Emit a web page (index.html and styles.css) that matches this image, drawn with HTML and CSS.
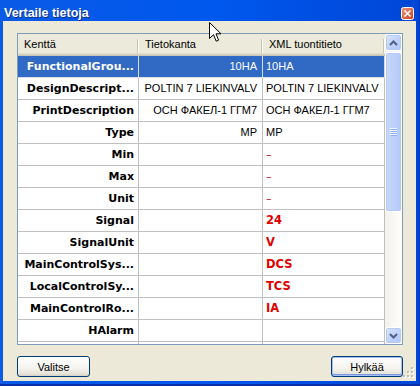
FILE: index.html
```html
<!doctype html>
<html>
<head>
	<meta charset="UTF-8">
	<title>Vertaile tietoja</title>
	<link rel="stylesheet" href="styles.css">
</head>
<body>
	<div class="window">
		<div class="titlebar">
			<span class="title">Vertaile tietoja</span>
			<span class="close">
				<svg width="13" height="13" viewBox="0 0 13 13">
					<defs>
						<linearGradient id="cg" x1="0" y1="0" x2="1" y2="1">
							<stop offset="0" stop-color="#f0957a"/>
							<stop offset="1" stop-color="#c9401e"/>
						</linearGradient>
					</defs>
					<rect x="0.5" y="0.5" width="12" height="12" rx="2" fill="url(#cg)" stroke="#fff"/>
					<path d="M3.5 3.5 L9.5 9.5 M9.5 3.5 L3.5 9.5" stroke="#fff" stroke-width="1.6"/>
				</svg>
			</span>
		</div>
		<div class="client">
			<div class="grid">
				<div class="table">
					<div class="head">
						<div class="hcell">Kenttä</div>
						<div class="hcell">Tietokanta</div>
						<div class="hcell">XML tuontitieto</div>
					</div>
					<div class="row sel">
						<div class="cell name">FunctionalGrou...</div>
						<div class="cell db">10HA</div>
						<div class="cell xml">10HA</div>
					</div>
					<div class="row">
						<div class="cell name">DesignDescript...</div>
						<div class="cell db">POLTIN 7 LIEKINVALV</div>
						<div class="cell xml">POLTIN 7 LIEKINVALV</div>
					</div>
					<div class="row">
						<div class="cell name">PrintDescription</div>
						<div class="cell db">ОСН ФАКЕЛ-1 ГГМ7</div>
						<div class="cell xml">ОСН ФАКЕЛ-1 ГГМ7</div>
					</div>
					<div class="row">
						<div class="cell name">Type</div>
						<div class="cell db">MP</div>
						<div class="cell xml">MP</div>
					</div>
					<div class="row">
						<div class="cell name">Min</div>
						<div class="cell db"></div>
						<div class="cell xml dash">–</div>
					</div>
					<div class="row">
						<div class="cell name">Max</div>
						<div class="cell db"></div>
						<div class="cell xml dash">–</div>
					</div>
					<div class="row">
						<div class="cell name">Unit</div>
						<div class="cell db"></div>
						<div class="cell xml dash">–</div>
					</div>
					<div class="row">
						<div class="cell name">Signal</div>
						<div class="cell db"></div>
						<div class="cell xml diff">24</div>
					</div>
					<div class="row">
						<div class="cell name">SignalUnit</div>
						<div class="cell db"></div>
						<div class="cell xml diff">V</div>
					</div>
					<div class="row">
						<div class="cell name">MainControlSys...</div>
						<div class="cell db"></div>
						<div class="cell xml diff">DCS</div>
					</div>
					<div class="row">
						<div class="cell name">LocalControlSy...</div>
						<div class="cell db"></div>
						<div class="cell xml diff">TCS</div>
					</div>
					<div class="row">
						<div class="cell name">MainControlRo...</div>
						<div class="cell db"></div>
						<div class="cell xml diff">IA</div>
					</div>
					<div class="row">
						<div class="cell name">HAlarm</div>
						<div class="cell db"></div>
						<div class="cell xml"></div>
					</div>
					<div class="row">
						<div class="cell name"></div>
						<div class="cell db"></div>
						<div class="cell xml"></div>
					</div>
				</div>
				<div class="vscroll">
					<div class="sbtn">
						<svg width="9" height="6" viewBox="0 0 9 6"><path d="M1 5 L4.5 1.5 L8 5" fill="none" stroke="#4d6185" stroke-width="2"/></svg>
					</div>
					<div class="thumb">
						<svg width="7" height="8" viewBox="0 0 7 8"><path d="M0 0.5 H7 M0 2.5 H7 M0 4.5 H7 M0 6.5 H7" stroke="#eef4fe"/><path d="M1 1.5 H7 M1 3.5 H7 M1 5.5 H7 M1 7.5 H7" stroke="#8cb0f8"/></svg>
					</div>
					<div class="track"></div>
					<div class="sbtn">
						<svg width="9" height="6" viewBox="0 0 9 6"><path d="M1 1 L4.5 4.5 L8 1" fill="none" stroke="#4d6185" stroke-width="2"/></svg>
					</div>
				</div>
			</div>
			<div class="buttons">
				<button class="btn">Valitse</button>
				<button class="btn def">Hylkää</button>
			</div>
			<svg class="grip" width="11" height="11" viewBox="0 0 11 11">
				<g fill="#fff">
					<rect x="9" y="1" width="2" height="2"/><rect x="9" y="5" width="2" height="2"/><rect x="9" y="9" width="2" height="2"/>
					<rect x="5" y="5" width="2" height="2"/><rect x="5" y="9" width="2" height="2"/><rect x="1" y="9" width="2" height="2"/>
				</g>
				<g fill="#c3bfb0">
					<rect x="8" y="0" width="2" height="2"/><rect x="8" y="4" width="2" height="2"/><rect x="8" y="8" width="2" height="2"/>
					<rect x="4" y="4" width="2" height="2"/><rect x="4" y="8" width="2" height="2"/><rect x="0" y="8" width="2" height="2"/>
				</g>
			</svg>
		</div>
	</div>
	<svg class="cursor" width="13" height="21" viewBox="0 0 13 21">
		<path d="M0.5 0.5 L0.5 16.5 L4.5 12.7 L7.2 19.2 L9.6 18.2 L7 11.8 L12 11.8 Z" fill="#fff" stroke="#000" stroke-linejoin="miter"/>
	</svg>
</body>
</html>
```

FILE: styles.css
```css
/*窗口基础*/
*{margin:0;padding:0;box-sizing:border-box;}
body{width:420px;height:386px;overflow:hidden;position:relative;background:#0a3fc2;font-family:"Liberation Sans",Arial,sans-serif;font-size:11px;color:#000;}
.window{height:386px;display:flex;flex-direction:column;padding:0 4px 5px 3px;background:linear-gradient(to right,#0a5ae6,#0058ee 50%,#0046d6);box-shadow:inset 0 -2px #0a2fa8,inset -1px 0 #0830b8;}

/*标题栏*/
.titlebar{height:21px;flex:none;display:flex;align-items:center;justify-content:space-between;padding:4px 2px 0 1px;}
.title{font-family:"Liberation Sans",Arial,sans-serif;font-weight:bold;font-size:12.5px;color:#fff;text-shadow:1px 1px #0c2a8c;}
.close{width:13px;height:13px;display:block;margin-top:1px;}
.close svg{display:block;}

/*客户区*/
.client{flex:1;position:relative;background:#ece9d8;padding:12px 13px 0 14px;display:flex;flex-direction:column;}
.grid{height:312px;flex:none;display:flex;border:1px solid #7f9db9;background:#fff;}
.table{flex:1;overflow:hidden;}

.head{height:22px;display:grid;grid-template-columns:121px 124px 122px;background:#ebeadb;box-shadow:inset 0 -1px #cbc7b8,inset 0 -2px #d6d2c2,inset 0 -3px #e2decd;}
.hcell{position:relative;padding:0 6px;line-height:21px;white-space:nowrap;overflow:hidden;}
.hcell::after{content:"";position:absolute;right:1px;top:5px;bottom:3px;width:1px;background:#c7c5b2;box-shadow:1px 0 #fff;}

.row{height:22px;display:grid;grid-template-columns:121px 124px 122px;border-bottom:1px solid #c0c0c0;}
.cell{border-right:1px solid #c0c0c0;line-height:21px;white-space:nowrap;overflow:hidden;}
.name{text-align:right;padding:0 4px 0 1px;font-family:"DejaVu Sans",Verdana,sans-serif;font-weight:bold;font-size:11px;}
.db{text-align:right;padding:0 5px 0 2px;}
.xml{padding:0 3px 0 3px;}
.dash{color:#d00000;font-family:"DejaVu Sans",Verdana,sans-serif;font-size:11px;}
.diff{color:#e00000;font-family:"DejaVu Sans",Verdana,sans-serif;font-weight:bold;font-size:11.5px;}
.sel{background:#316ac5;color:#fff;border-bottom-color:#d8dce8;}
.sel .cell{border-right-color:#d8dce8;}

/*滚动条*/
.vscroll{width:17px;flex:none;display:flex;flex-direction:column;background:linear-gradient(to right,#f3f1ec,#fefefb);}
.sbtn{height:17px;flex:none;display:flex;align-items:center;justify-content:center;border:1px solid #fff;border-radius:3px;background:linear-gradient(135deg,#dce7ff,#bccffa 60%,#b0c6f6);box-shadow:inset 0 0 0 1px #b6c9f2;}
.thumb{height:160px;flex:none;margin-top:1px;display:flex;align-items:center;justify-content:center;border:1px solid #fff;border-radius:3px;background:linear-gradient(to right,#c9d8fc,#bcd0fa 60%,#b2c8f8);box-shadow:inset 0 0 0 1px #b3c8f5,inset 0 -1px #98b2ee;}
.thumb svg,.sbtn svg{display:block;}
.track{flex:1;}

/*按钮*/
.buttons{margin-top:11px;display:flex;justify-content:space-between;}
.btn{width:73px;height:21px;border:1px solid #003c74;border-radius:3px;background:linear-gradient(#ffffff,#f4f3ee 60%,#e6e3d8 88%,#d6d0c5);font-family:"Liberation Sans",Arial,sans-serif;font-size:11px;color:#000;}
.def{width:72px;box-shadow:inset 0 0 0 1px #a8c0f4,inset 0 -1px 0 1px #7a97e8;}

.grip{position:absolute;right:2px;bottom:3px;}
.cursor{position:absolute;left:209px;top:22px;}
```
